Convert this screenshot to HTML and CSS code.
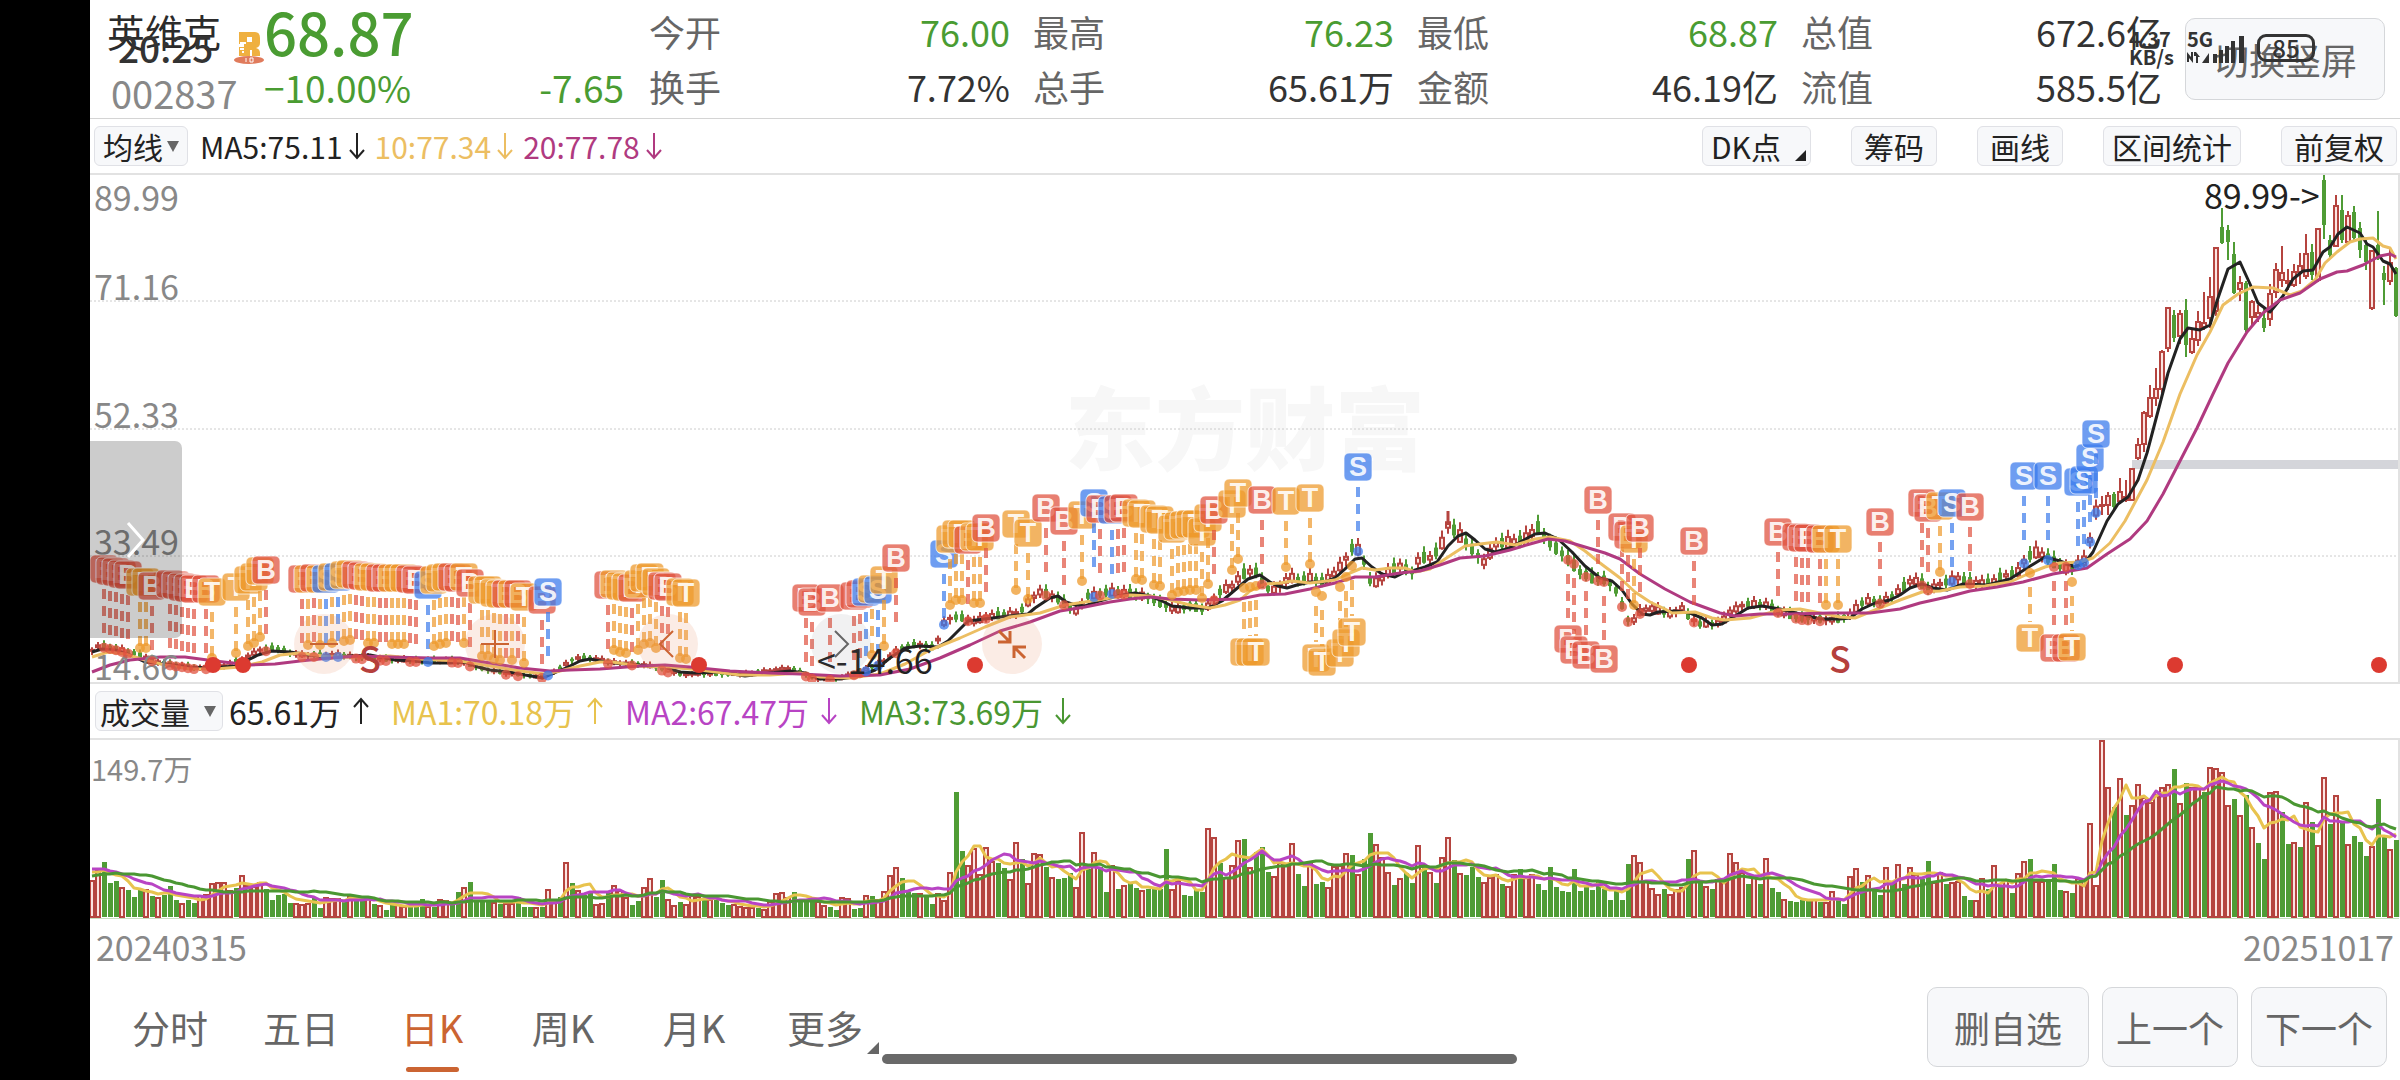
FILE: index.html
```html
<!DOCTYPE html>
<html lang="zh-CN">
<head>
    <meta charset="UTF-8">
    <meta name="viewport" content="width=device-width, initial-scale=1.0">
    <title>英维克 002837</title>
    <link rel="stylesheet" href="styles.css">
</head>
<body>
    <div class="notch"></div>
    <main class="app">
        <div class="status-time">20:25</div>
        <div class="status-right">
            <div class="net-speed">4.37<br>KB/s</div>
            <div class="signal">
                <span>5G</span>
                <svg width="60" height="30" viewBox="0 0 60 30">
                    <g fill="#333">
                        <path d="M0 18l4 5v-5h2v11l-4-5v4H0zM7 18h2l4 5h-2v6H9v-7H7z"/>
                        <path d="M15 29l7-10v10z"/>
                        <rect x="26" y="20" width="4" height="9"/>
                        <rect x="32" y="16" width="4" height="13"/>
                        <rect x="38" y="12" width="4" height="17"/>
                        <rect x="44" y="7" width="4" height="22"/>
                        <rect x="52" y="2" width="5" height="27"/>
                    </g>
                </svg>
            </div>
            <div class="battery">85</div>
        </div>

        <header class="header">
            <div class="stock">
                <div class="stock-name">英维克
                    <svg width="32" height="34" viewBox="0 0 32 34">
                        <path fill="#efb040" d="M6 1h16q5 0 5 6v5q0 4-4 5 4 1 4 5v3h-8v-6h-2v6H6V16h5v-3H6zm8 5v5h5V6z"/>
                        <path fill="#fff" d="M7 11h6v2H7zM7 17h4v2H7zM9 20h2v2H9z"/>
                        <ellipse cx="16" cy="29" rx="15" ry="4" fill="#e07b5c"/>
                        <path stroke="#fff" d="M13 27v4M17 27v4h3v-4z" fill="none"/>
                    </svg>
                </div>
                <div class="stock-code">002837</div>
            </div>
            <div class="quote">
                <div class="price">68.87</div>
                <div class="change"><span>−10.00%</span><span>-7.65</span></div>
            </div>
            <dl class="stats">
                <div><dt>今开</dt><dd class="down">76.00</dd></div>
                <div><dt>最高</dt><dd class="down">76.23</dd></div>
                <div><dt>最低</dt><dd class="down">68.87</dd></div>
                <div><dt>总值</dt><dd>672.6亿</dd></div>
                <div><dt>换手</dt><dd>7.72%</dd></div>
                <div><dt>总手</dt><dd>65.61万</dd></div>
                <div><dt>金额</dt><dd>46.19亿</dd></div>
                <div><dt>流值</dt><dd>585.5亿</dd></div>
            </dl>
            <button class="btn btn-rotate">切换竖屏</button>
        </header>

        <section class="toolbar">
            <button class="chip">均线<span class="caret"></span></button>
            <div class="legend">
                <span class="c-black">MA5:75.11<svg class="arrow" viewBox="0 0 16 28"><path d="M8 1v25M1 18l7 8 7-8"/></svg></span>
                <span class="c-yellow">10:77.34<svg class="arrow" viewBox="0 0 16 28"><path d="M8 1v25M1 18l7 8 7-8"/></svg></span>
                <span class="c-purple">20:77.78<svg class="arrow" viewBox="0 0 16 28"><path d="M8 1v25M1 18l7 8 7-8"/></svg></span>
            </div>
            <div class="tools">
                <button class="chip">DK点<span class="corner"></span></button>
                <button class="chip chip-wide">筹码</button>
                <button class="chip chip-wide">画线</button>
                <button class="chip">区间统计</button>
                <button class="chip chip-wide">前复权</button>
            </div>
        </section>

        <section class="chart">
            <svg id="kline" viewBox="90 173 2310 511"></svg>
            <button class="drawer" aria-label="展开"><svg width="20" height="38" viewBox="0 0 20 38"><path d="M2 2l15 17L2 36"/></svg></button>
            <div class="chart-controls">
                <button class="round zoom-out" aria-label="缩小"><svg viewBox="0 0 60 60"><path d="M16 30h28"/></svg></button>
                <button class="round zoom-in" aria-label="放大"><svg viewBox="0 0 60 60"><path d="M16 30h28M30 16v28"/></svg></button>
                <button class="round prev" aria-label="左移"><svg viewBox="0 0 60 60"><path d="M35 17L22 30l13 13"/></svg></button>
                <button class="round next" aria-label="右移"><svg viewBox="0 0 60 60"><path d="M24 17l13 13-13 13"/></svg></button>
                <button class="round shrink" aria-label="收起"><svg viewBox="0 0 60 60"><path d="M17 17l11 11M28 17v11H16M43 44L32 33M32 44V33h12"/></svg></button>
            </div>
        </section>

        <section class="toolbar toolbar-vol">
            <button class="chip">成交量<span class="caret"></span></button>
            <div class="legend legend-vol">
                <span class="c-black">65.61万<svg class="arrow" viewBox="0 0 16 28"><path d="M8 27V2M1 10l7-8 7 8"/></svg></span>
                <span class="c-gold">MA1:70.18万<svg class="arrow" viewBox="0 0 16 28"><path d="M8 27V2M1 10l7-8 7 8"/></svg></span>
                <span class="c-violet">MA2:67.47万<svg class="arrow" viewBox="0 0 16 28"><path d="M8 1v25M1 18l7 8 7-8"/></svg></span>
                <span class="c-green">MA3:73.69万<svg class="arrow" viewBox="0 0 16 28"><path d="M8 1v25M1 18l7 8 7-8"/></svg></span>
            </div>
        </section>

        <section class="chart">
            <svg id="volume" viewBox="90 738 2310 182"></svg>
        </section>
        <div class="dates"><span>20240315</span><span>20251017</span></div>

        <footer class="footer">
            <nav class="tabs">
                <a href="#">分时</a>
                <a href="#">五日</a>
                <a href="#" class="active">日K</a>
                <a href="#">周K</a>
                <a href="#">月K</a>
                <a href="#" class="more">更多</a>
            </nav>
            <div class="actions">
                <button class="btn btn-del">删自选</button>
                <button class="btn">上一个</button>
                <button class="btn">下一个</button>
            </div>
        </footer>
        <div class="home-bar"></div>
    </main>
    <script src="chart.js"></script>
</body>
</html>
```

FILE: styles.css
```css
* {
    box-sizing: border-box;
}
body {
    margin: 0;
    display: flex;
    min-height: 100vh;
    background-color: #fff;
    color: #2b2b2b;
    font-family: "Noto Sans CJK SC", sans-serif;
}
button {
    font-family: inherit;
    cursor: pointer;
}
.notch {
    flex: 0 0 90px;
    background-color: #000;
}
.app {
    position: relative;
    flex: 1;
    min-width: 0;
    display: flex;
    flex-direction: column;
}

/* system status bar, drawn over the page */
.status-time {
    position: absolute;
    left: 28px;
    top: 29px;
    font-size: 37px;
    line-height: 36px;
    font-weight: 500;
    color: #333;
}
.status-right {
    position: absolute;
    right: 85px;
    top: 30px;
    display: flex;
    gap: 10px;
    z-index: 2;
    pointer-events: none;
    color: #333;
    font-weight: 700;
}
.net-speed {
    width: 48px;
    font-size: 20px;
    line-height: 18px;
}
.signal {
    display: flex;
    position: relative;
    width: 60px;
}
.signal span {
    position: absolute;
    font-size: 20px;
    line-height: 18px;
}
.signal svg {
    margin-top: 4px;
}
.battery {
    width: 58px;
    height: 28px;
    margin-top: 4px;
    border: 3px solid #333;
    border-radius: 9px;
    font-size: 24px;
    line-height: 22px;
    text-align: center;
    font-weight: 500;
}

.header {
    display: flex;
    height: 119px;
    padding: 3px 15px 0 17px;
    border-bottom: 1px solid #d4d4d4;
}
.stock {
    width: 157px;
}
.stock-name {
    display: flex;
    gap: 12px;
    font-size: 38px;
    line-height: 56px;
    white-space: nowrap;
}
.stock-name svg {
    flex: none;
    margin-top: 28px;
}
.stock-code {
    padding-left: 4px;
    font-size: 38px;
    line-height: 56px;
    color: #888;
}
.quote {
    width: 360px;
    color: #4a9c32;
}
.price {
    font-size: 58px;
    line-height: 56px;
    font-weight: 500;
}
.change {
    display: flex;
    justify-content: space-between;
    font-size: 37px;
    line-height: 56px;
}
.stats {
    flex: 1;
    display: grid;
    grid-template-columns: repeat(4, 1fr);
    grid-auto-rows: 55px;
    column-gap: 23px;
    margin: 0 23px 0 25px;
    font-size: 36px;
    line-height: 56px;
}
.stats div {
    display: flex;
    justify-content: space-between;
}
.stats dt {
    color: #666;
}
.stats dd {
    margin: 0;
    color: #333;
}
.stats .down {
    color: #4a9c32;
}
.btn {
    height: 80px;
    padding: 0 13px;
    border: 1px solid #d5d7da;
    border-radius: 10px;
    background-color: #f7f8fa;
    color: #666;
    font-size: 36px;
}
.btn-rotate {
    width: 200px;
    height: 82px;
    margin-top: 15px;
}

.toolbar {
    display: flex;
    align-items: center;
    height: 54px;
    padding: 0 3px 0 4px;
}
.toolbar-vol {
    padding-left: 5px;
}
.chip {
    position: relative;
    display: flex;
    align-items: center;
    height: 40px;
    padding: 0 8px;
    border: 1px solid #e0e1e6;
    border-radius: 6px;
    background-color: #f7f8fa;
    color: #222;
    font-size: 30px;
    line-height: 36px;
}
.chip-wide {
    padding: 0 12px;
}
.caret {
    margin-left: 4px;
    border: 6px solid transparent;
    border-top: 11px solid #666;
    border-bottom: 0;
}
.toolbar-vol .chip {
    padding: 0 6px 0 4px;
}
.toolbar-vol .caret {
    margin-left: 14px;
}
.corner {
    align-self: flex-end;
    margin: 0 -4px 4px 14px;
    border-left: 11px solid transparent;
    border-bottom: 11px solid #222;
}
.legend {
    display: flex;
    gap: 10px;
    margin-left: 12px;
    font-size: 30px;
    line-height: 40px;
}
.legend-vol {
    gap: 22px;
    margin-left: 6px;
    font-size: 32px;
}
.legend span {
    display: flex;
    align-items: center;
    gap: 6px;
}
.legend-vol span {
    gap: 12px;
}
.arrow {
    width: 16px;
    height: 28px;
    fill: none;
    stroke: currentColor;
    stroke-width: 2;
}
.c-black { color: #222; }
.c-yellow { color: #ecbe62; }
.c-purple { color: #b03a80; }
.c-gold { color: #e8c34e; }
.c-violet { color: #b844c4; }
.c-green { color: #4a9732; }
.tools {
    display: flex;
    gap: 40px;
    margin-left: auto;
}

.chart {
    position: relative;
}
.chart > svg {
    display: block;
    width: 100%;
    height: auto;
}
.grid-line {
    stroke: #ccc;
    stroke-dasharray: 2 2;
}
.frame {
    fill: none;
    stroke: #e2e2e2;
    stroke-width: 2;
}
.axis {
    font-size: 34px;
    fill: #888;
}
.axis-vol {
    font-size: 29px;
}
.peak {
    font-size: 34px;
    fill: #222;
}
.watermark {
    font-size: 90px;
    font-weight: 900;
    fill: #f7f7f7;
}
.up {
    fill: #fbe3e0;
    stroke: #b5443f;
    stroke-width: 2;
}
.fall {
    fill: #4f9c35;
    stroke: none;
}
.ma {
    fill: none;
    stroke-width: 3;
    stroke-linejoin: round;
}
.ma-vol {
    stroke-width: 2;
}
.badge-text {
    font-family: "Liberation Sans", Arial, sans-serif;
    font-size: 27px;
    font-weight: 700;
    fill: #fff;
    fill-opacity: 0.9;
    text-anchor: middle;
}
.event-s {
    font-size: 36px;
    font-weight: 500;
    fill: #b5403c;
    text-anchor: middle;
}
.drawer {
    position: absolute;
    left: 0;
    top: 268px;
    width: 92px;
    height: 197px;
    padding: 0;
    border: 0;
    border-radius: 0 7px 7px 0;
    background-color: rgba(0, 0, 0, 0.2);
}
.drawer svg {
    fill: none;
    stroke: #fff;
    stroke-width: 3;
    vertical-align: middle;
}
.round {
    position: absolute;
    bottom: 10px;
    width: 60px;
    height: 60px;
    padding: 0;
    border: 0;
    border-radius: 50%;
    background-color: rgba(233, 150, 110, 0.18);
}
.round svg {
    display: block;
    fill: none;
    stroke: #cb6432;
    stroke-width: 2;
}
.zoom-out { left: 204px; }
.zoom-in { left: 375px; }
.prev { left: 548px; }
.next {
    left: 721px;
    background-color: rgba(120, 120, 130, 0.1);
}
.next svg { stroke: #666; }
.shrink { left: 892px; }
.shrink svg { stroke-width: 3; }

.dates {
    display: flex;
    justify-content: space-between;
    padding: 0 6px;
    font-size: 34px;
    line-height: 54px;
    color: #888;
}
.footer {
    flex: 1;
    display: flex;
    justify-content: space-between;
    align-items: center;
    padding: 0 13px 0 42px;
}
.tabs {
    display: flex;
    gap: 55px;
}
.tabs a {
    position: relative;
    min-width: 76px;
    font-size: 38px;
    line-height: 60px;
    text-align: center;
    color: #666;
    text-decoration: none;
}
.tabs .active {
    color: #cb6432;
}
.tabs .active::after {
    content: "";
    position: absolute;
    left: 12px;
    bottom: -15px;
    width: 53px;
    height: 5px;
    border-radius: 3px;
    background-color: #cb6432;
}
.tabs .more::after {
    content: "";
    position: absolute;
    right: -16px;
    bottom: 3px;
    border-left: 12px solid transparent;
    border-bottom: 12px solid #666;
}
.actions {
    display: flex;
    gap: 13px;
}
.btn-del {
    padding: 0 26px;
}
.home-bar {
    position: absolute;
    left: 792px;
    bottom: 16px;
    width: 635px;
    height: 10px;
    border-radius: 5px;
    background-color: #696969;
}
```

FILE: chart.js
```js
const STEP = 6;
const X0 = 92;
const RED = '#b5443f';
const GREEN = '#4f9c35';

// daily volume, negative = closed down
const volumes = [
    37, 48, -55, -34, -36, 30, -27, -20, -27, 28, -21, 20, -22, -31, -17, 14, -17, -14, 22, 23,
    34, 35, 35, 27, -29, 42, 32, 31, 35, -28, -17, -22, -23, -14, 14, 13, 14, -20, -9, 20,
    19, 19, -15, 22, -18, -18, 19, -13, 12, -7, -13, 13, 11, -10, -10, -18, 11, -10, 18, 17,
    -14, -25, 30, -35, -15, -17, -17, 15, -13, 14, 14, -20, -10, -10, 10, -10, 28, 15, -20, 55,
    -34, 27, -22, -25, 13, 14, -24, 32, 27, 20, -12, -16, 30, 39, -20, -37, 18, 12, -15, 13,
    22, 21, -17, 18, -17, -14, -12, 13, 11, 10, 10, -9, 8, 16, 24, 25, 20, -25, -18, -15,
    -15, 16, 12, -10, -7, 20, 19, -8, -9, 22, -21, 18, 26, 42, 50, -39, -25, -24, 24, -22,
    -13, 24, 17, 45, -125, -66, 52, 69, 43, 70, 56, -54, -49, 38, 75, -58, 34, 64, 63, -50,
    40, -38, -39, -44, 30, 85, -48, 65, -50, -25, 52, -28, 32, -34, -29, 27, -28, -28, -28, -68,
    28, 37, -22, -21, -28, -25, 89, 80, -54, 40, 52, 77, -78, 50, -65, -70, -45, 41, 55, 54,
    74, -43, -31, 54, -33, -35, 30, 51, 52, 64, -62, 43, -58, -84, 73, 60, 45, -32, 39, -44,
    -34, 72, -50, 45, -34, 60, 80, -57, 44, -42, -50, -40, 35, 40, 43, -33, 31, 43, -48, 40,
    43, -33, -27, -50, -30, -26, -25, -48, -26, -30, -27, -35, -28, -17, -26, -17, -53, 62, 55, 36,
    29, 23, -28, 23, 28, 30, -58, 67, -36, 31, -28, 38, 37, 64, 55, 45, -33, 42, -33, 59,
    -29, -25, 18, -16, -15, -17, -18, 18, -15, 15, 26, -18, -13, 41, 49, -35, 42, -29, -22, 50,
    -34, 53, -33, 50, 43, -38, -56, 35, 45, -33, 35, 36, -21, -17, 17, 39, -28, 52, -30, 38,
    -24, 44, 56, -58, 36, 36, -38, -53, -27, 26, -24, 39, 37, 94, 32, 177, 130, -110, 139, -102,
    112, 133, 120, 115, 123, 130, 133, -148, 114, -134, 130, 131, -125, 150, 149, 145, 112, -118, 102, -122,
    90, -74, -58, 125, 126, -105, -73, 75, -70, 115, -95, 72, 140, -93, 122, -95, 73, -81, -75, -61,
    71, -118, -80, 68, -77
];

// volume of the 20 days before the first bar, used by the averages
const before = [32, 32, 32, 32, 32, 32, 32, 32, 32, 32, 53, 53, 53, 53, 53, 47, 47, 47, 47, 47];

const ma5 = [[92,652],[102,649],[115,650],[130,655],[145,662],[165,664],[190,667],[212,668],[235,666],[246,661],[258,655],[272,651],[290,652],[310,655],[330,658],[350,656],[370,655],[395,660],[415,661],[430,663],[450,663],[465,662],[478,667],[490,670],[510,672],[525,675],[543,678],[552,674],[568,667],[580,661],[590,659],[605,662],[625,664],[650,666],[665,667],[680,672],[695,673],[720,672],[745,676],[770,673],[790,671],[805,673],[820,679],[840,679],[860,676],[875,670],[890,658],[905,648],[920,646],[938,647],[948,641],[968,621],[985,619],[1008,616],[1028,614],[1035,608],[1050,598],[1058,596],[1066,602],[1075,605],[1085,606],[1096,602],[1110,598],[1122,595],[1135,593],[1150,596],[1160,600],[1172,606],[1190,608],[1208,608],[1222,601],[1235,590],[1248,579],[1260,575],[1270,582],[1278,586],[1287,588],[1297,585],[1310,582],[1325,582],[1335,578],[1345,569],[1355,559],[1362,558],[1372,567],[1382,574],[1395,577],[1405,572],[1412,571],[1425,567],[1437,562],[1448,546],[1458,536],[1466,533],[1475,540],[1485,549],[1495,552],[1510,548],[1522,541],[1535,534],[1545,533],[1558,539],[1572,552],[1585,566],[1600,578],[1612,581],[1622,590],[1632,604],[1642,614],[1650,615],[1658,612],[1675,611],[1690,613],[1702,618],[1712,625],[1722,624],[1735,616],[1748,608],[1762,606],[1780,609],[1800,614],[1820,619],[1840,619],[1850,618],[1862,609],[1875,603],[1890,600],[1900,595],[1910,588],[1922,584],[1933,588],[1947,590],[1963,584],[1987,585],[2010,579],[2027,568],[2045,557],[2060,561],[2075,567],[2087,560],[2093,552],[2107,521],[2118,504],[2128,497],[2138,480],[2147,453],[2157,415],[2168,373],[2180,339],[2188,328],[2200,330],[2210,325],[2217,301],[2228,269],[2240,262],[2250,284],[2258,303],[2270,312],[2283,296],[2293,279],[2303,271],[2313,270],[2323,252],[2330,247],[2338,234],[2347,227],[2360,233],[2367,244],[2373,247],[2383,261],[2390,264],[2396,274]];
const ma10 = [[92,657],[108,652],[125,654],[145,660],[165,665],[190,669],[215,669],[240,667],[262,662],[280,655],[300,653],[330,657],[360,657],[390,656],[420,659],[460,661],[490,666],[520,671],[545,674],[560,671],[580,666],[600,662],[612,662],[640,666],[670,667],[700,670],[740,675],[770,675],[800,673],[820,677],[850,678],[880,674],[905,664],[930,650],[960,638],[985,627],[1010,617],[1040,613],[1065,605],[1085,602],[1110,598],[1130,595],[1150,596],[1170,600],[1190,605],[1210,608],[1225,605],[1240,600],[1250,591],[1265,584],[1280,583],[1292,581],[1310,583],[1335,580],[1350,573],[1362,568],[1375,570],[1390,568],[1405,568],[1415,572],[1430,569],[1445,559],[1465,546],[1480,544],[1497,542],[1515,545],[1535,539],[1550,537],[1570,541],[1585,551],[1600,563],[1620,578],[1635,592],[1650,602],[1665,609],[1672,613],[1695,612],[1712,618],[1725,620],[1750,618],[1780,610],[1800,609],[1820,613],[1840,617],[1855,618],[1875,610],[1900,600],[1922,592],[1940,591],[1960,587],[1985,586],[2010,582],[2030,573],[2045,567],[2060,563],[2080,562],[2093,558],[2110,543],[2125,521],[2147,480],[2163,442],[2180,394],[2197,355],[2210,332],[2223,305],[2238,294],[2253,287],[2273,288],[2290,295],[2302,291],[2315,280],[2325,263],[2337,252],[2350,242],[2360,239],[2373,238],[2383,246],[2390,248],[2396,259]];
const ma20 = [[92,672],[110,665],[130,660],[160,657],[185,657],[215,661],[250,665],[275,664],[300,661],[330,658],[360,656],[390,657],[430,658],[460,658],[490,663],[520,668],[550,671],[570,670],[600,669],[640,666],[665,665],[690,667],[730,671],[770,673],[800,674],[840,676],[880,675],[910,669],[940,658],[970,645],[1000,631],[1030,622],[1060,611],[1085,607],[1110,602],[1130,599],[1150,597],[1170,599],[1200,600],[1240,599],[1260,595],[1285,594],[1310,589],[1335,583],[1355,577],[1375,577],[1400,573],[1420,571],[1440,565],[1460,558],[1485,556],[1510,550],[1530,544],[1548,539],[1565,541],[1585,547],[1605,553],[1620,559],[1640,574],[1665,589],[1690,602],[1720,613],[1735,616],[1760,614],[1790,614],[1830,613],[1870,613],[1900,609],[1920,603],[1947,597],[1970,591],[1997,587],[2023,582],[2053,574],[2087,568],[2107,554],[2130,539],[2147,521],[2163,494],[2180,461],[2197,428],[2213,394],[2228,363],[2247,332],[2263,313],[2280,300],[2300,293],[2320,279],[2337,272],[2347,271],[2363,265],[2380,256],[2390,254],[2396,257]];

// middle of the candles up to bar 334
const mid = [[92,650],[100,645],[115,648],[140,655],[160,662],[200,668],[225,665],[245,658],[260,650],[275,648],[300,655],[340,655],[370,658],[400,660],[440,660],[460,661],[480,668],[500,672],[540,677],[560,668],[575,658],[590,658],[610,662],[640,664],[660,668],[680,674],[740,674],[790,668],[815,678],[840,678],[870,668],[885,660],[900,648],[918,644],[935,648],[945,620],[955,617],[965,618],[975,622],[985,617],[1000,615],[1010,614],[1020,612],[1030,600],[1040,592],[1048,594],[1060,600],[1070,608],[1078,612],[1085,596],[1095,595],[1105,592],[1120,592],[1145,596],[1160,603],[1175,610],[1190,606],[1205,610],[1215,597],[1222,590],[1235,585],[1240,575],[1255,570],[1265,588],[1275,590],[1290,577],[1300,580],[1310,578],[1325,582],[1335,573],[1345,560],[1352,548],[1360,550],[1370,580],[1378,583],[1388,572],[1400,566],[1412,572],[1420,557],[1432,558],[1442,543],[1448,525],[1454,530],[1462,538],[1473,550],[1484,562],[1497,543],[1512,542],[1525,540],[1538,527],[1550,543],[1565,556],[1580,572],[1592,578],[1605,580],[1615,588],[1622,605],[1628,620],[1634,620],[1640,612],[1650,608],[1670,614],[1682,608],[1690,618],[1700,624],[1712,624],[1722,622],[1730,612],[1745,604],[1765,604],[1780,612],[1800,618],[1835,620],[1850,615],[1860,604],[1870,600],[1882,602],[1890,598],[1900,590],[1912,580],[1920,582],[1930,590],[1940,584],[1958,578],[1970,582],[1990,584],[2000,577],[2018,572],[2026,558],[2035,552],[2045,556],[2055,563],[2068,570],[2080,562],[2086,560],[2090,540],[2096,511]];

// bars 335..384: high, low, body top, body bottom
const tail = [
    [496,515,504,506],[492,515,495,506],[492,509,494,507],[478,504,491,502],[480,502,496,501],
    [468,501,468,501],[438,460,444,459],[411,452,412,445],[385,418,397,417],[368,406,388,399],
    [350,393,351,390],[307,352,307,349],[310,342,315,338],[310,344,313,337],[299,357,310,345],
    [330,354,338,353],[311,346,321,341],[292,330,322,328],[277,328,296,319],[247,316,247,312],
    [208,244,227,243],[225,260,230,242],[242,294,254,293],[276,301,282,290],[281,332,283,330],
    [300,327,301,318],[305,322,312,318],[308,332,318,328],[284,326,293,320],[263,298,269,293],
    [246,287,272,281],[269,290,280,284],[264,287,271,286],[253,284,265,273],[234,279,253,277],
    [244,280,252,275],[228,282,228,281],[174,239,180,225],[235,258,240,255],[195,247,205,247],
    [195,243,210,240],[211,244,215,243],[206,242,212,238],[222,258,228,250],[240,270,245,262],
    [250,310,250,309],[211,260,245,258],[266,305,273,280],[248,285,262,282],[267,317,268,316]
];
const tailColors = 'rrgrrrrrrrrrgrgrrrrrgggrgrrgrrrrrrrgrggrgrgggrggrg';

// runs of trade marks: first bar, letters, badge y per letter
const marksAbove = [
    [2, 'BBBBB', [569,571,572,574,575]], [8, 'TTB', [582,582,586]],
    [13, 'BBBBB', [584,585,587,588,589]], [19, 'BT', [589,592]], [24, 'T', [587]],
    [26, 'TTTB', [580,577,571,570]],
    [35, 'BTBTSTSTTBBTTBBTTTBB', [579,579,578,579,579,577,577,575,574,575,576,577,577,578,578,578,578,578,579,580]],
    [56, 'STTTBBTB', [585,580,578,577,577,578,577,583]],
    [65, 'TTTTBTBT', [590,590,593,594,594,594,594,597]], [75, 'BS', [600,592]],
    [86, 'BTTTBTTTTBB', [585,584,586,587,588,584,578,577,582,586,587]], [98, 'TT', [592,593]],
    [119, 'BB', [598,602]], [123, 'B', [598]], [127, 'BBSTST', [596,594,592,589,590,580]],
    [134, 'B', [558]], [142, 'STTTBTTB', [554,539,534,534,540,537,537,528]],
    [154, 'T', [524]], [156, 'T', [533]], [159, 'B', [508]], [162, 'B', [521]], [165, 'T', [515]],
    [167, 'SB', [503,509]], [170, 'SBB', [510,509,508]], [174, 'TT', [513,514]], [177, 'TT', [519,520]],
    [180, 'TTTTTTTB', [529,526,525,524,524,532,518,510]], [190, 'TT', [504,493]], [195, 'B', [500]],
    [199, 'T', [501]], [203, 'T', [498]], [211, 'S', [467]], [251, 'B', [500]],
    [255, 'BBTB', [527,535,539,528]], [267, 'B', [541]], [281, 'B', [532]], [284, 'BBB', [537,538,538]],
    [288, 'BT', [539,539]], [291, 'T', [539]], [298, 'B', [522]], [305, 'BB', [503,508]], [308, 'T', [506]],
    [310, 'S', [503]], [313, 'B', [507]], [322, 'S', [476]], [326, 'S', [476]], [331, 'SSSS', [482,480,458,434]]
];
// bar, letter, badge y, dot y
const marksBelow = [
    [192,'T',652,588], [193,'T',652,587], [194,'T',652,586], [204,'T',658,592], [205,'T',662,596],
    [208,'T',653,587], [209,'T',643,577], [210,'T',632,566], [246,'B',639,560], [247,'B',650,564],
    [249,'B',655,577], [252,'B',659,582], [323,'T',638,573], [327,'B',648,567], [329,'B',648,567], [330,'T',647,582]
];
const markColors = { B: '#e0523f', S: '#3b7bec', T: '#ee9a2c' };

function barX(i) {
    return X0 + i * STEP;
}

function valueAt(points, x) {
    for (let k = 1; k < points.length; k++) {
        if (x <= points[k][0]) {
            const a = points[k - 1];
            const b = points[k];
            return a[1] + (b[1] - a[1]) * (x - a[0]) / (b[0] - a[0]);
        }
    }
    return points[points.length - 1][1];
}

function line(points, color, cls) {
    return `<polyline class="${cls}" stroke="${color}" points="${points.map(p => p.join(',')).join(' ')}"/>`;
}

function candle(i, up, high, low, top, bottom) {
    const x = barX(i);
    let s = `<path stroke="${up ? RED : GREEN}" stroke-width="2" d="M${x} ${high}V${low}"/>`;
    if (up) {
        s += `<rect class="up" x="${x - 2}" y="${top + 1}" width="4" height="${Math.max(1, bottom - top - 2)}"/>`;
    } else {
        s += `<rect class="fall" x="${x - 2}" y="${top}" width="4" height="${Math.max(2, bottom - top)}"/>`;
    }
    return s;
}

function mark(i, letter, y, dotY, below) {
    const x = barX(i);
    const c = markColors[letter];
    const from = below ? y - 16 : y + 16;
    const to = below ? dotY + 14 : y + 64;
    return `<path stroke="${c}" stroke-width="4" stroke-dasharray="10 7" opacity="0.7" d="M${x} ${to}V${from}"/>
        <circle cx="${x}" cy="${dotY}" r="5" fill="${c}" opacity="0.75"/>
        <rect x="${x - 14}" y="${y - 14}" width="28" height="28" rx="5" fill="${c}" fill-opacity="0.74" stroke="#fff" stroke-opacity="0.7"/>
        <text class="badge-text" x="${x}" y="${y + 9}">${letter}</text>`;
}

function drawKline() {
    let s = '<text class="watermark" x="1065" y="463">东方财富</text>';
    [301, 429, 556].forEach(y => {
        s += `<path class="grid-line" d="M90 ${y}H2399"/>`;
    });
    s += '<rect x="2132" y="460" width="267" height="9" fill="#d4d5da"/>';

    for (let i = 0; i < 335; i++) {
        const y = valueAt(mid, barX(i));
        const half = 2 + Math.max(0, 675 - y) * 0.035;
        const wave = (i * 37 % 11) / 10;
        const body = half * (0.4 + wave * 0.6);
        s += candle(i, volumes[i] > 0, y - half - wave * half, y + half + (1 - wave) * 2, y - body, y + body);
    }
    tail.forEach((t, k) => {
        s += candle(335 + k, tailColors[k] === 'r', ...t);
    });
    s += '<path stroke="#b5443f" stroke-width="3" d="M1448 511V525"/>';

    s += line(ma5, '#222', 'ma') + line(ma10, '#ecbe62', 'ma') + line(ma20, '#b03a80', 'ma');

    [['89.99', 211], ['71.16', 300], ['52.33', 428], ['33.49', 555], ['14.66', 680]].forEach(a => {
        s += `<text class="axis" x="94" y="${a[1]}">${a[0]}</text>`;
    });

    marksBelow.forEach(m => {
        s += mark(m[0], m[1], m[2], m[3], true);
    });
    marksAbove.forEach(([first, letters, ys]) => {
        for (let k = 0; k < letters.length; k++) {
            const i = first + k;
            const dot = letters[k] === 'T' ? ys[k] + 66 : valueAt(mid, barX(i)) + 2;
            s += mark(i, letters[k], ys[k], dot, false);
        }
    });

    [213, 243, 699, 975, 1689, 2175, 2379].forEach(x => {
        s += `<circle cx="${x}" cy="665" r="8" fill="#dc3a30"/>`;
    });
    [370, 1840].forEach(x => {
        s += `<text class="event-s" x="${x}" y="673">S</text>`;
    });
    s += '<text class="peak" x="817" y="674">&lt;-14.66</text>';
    s += '<text class="peak" x="2204" y="209">89.99-&gt;</text>';
    s += '<path class="frame" d="M90 174H2399V683H90"/>';
    document.getElementById('kline').innerHTML = s;
}

function average(n) {
    const all = before.concat(volumes.map(Math.abs));
    return volumes.map((v, i) => {
        let sum = 0;
        for (let k = 0; k < n; k++) sum += all[i + 20 - k];
        return [barX(i), 917 - Math.round(sum / n)];
    });
}

function drawVolume() {
    let s = '<path class="frame" d="M90 739H2399V917"/>';
    volumes.forEach((v, i) => {
        const h = Math.abs(v);
        if (v > 0) {
            s += `<rect class="up" x="${barX(i) - 2}" y="${918 - h}" width="4" height="${h - 1}"/>`;
        } else {
            s += `<rect class="fall" x="${barX(i) - 2}" y="${917 - h}" width="5" height="${h}"/>`;
        }
    });
    s += '<path stroke="#c9dfc0" d="M90 918.5H2399"/>';
    s += line(average(5), '#e8c34e', 'ma') + line(average(10), '#b844c4', 'ma') + line(average(20), '#4a9732', 'ma');
    s += '<text class="axis axis-vol" x="91" y="781">149.7万</text>';
    document.getElementById('volume').innerHTML = s;
}

drawKline();
drawVolume();
```
